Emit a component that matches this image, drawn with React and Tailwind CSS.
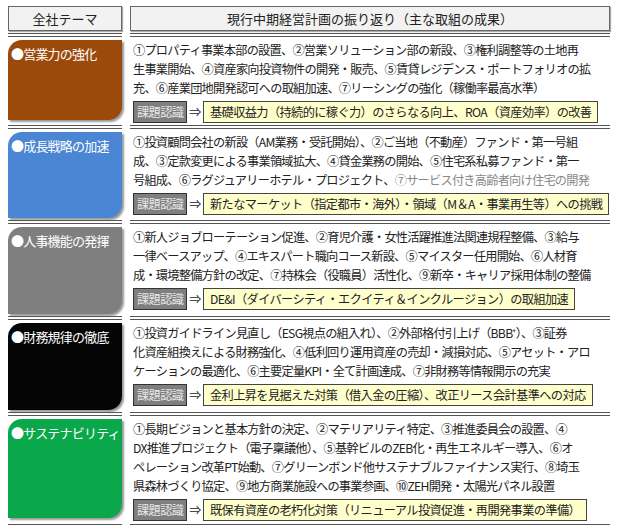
import React from "react";

const sections = [
  {
    title: "●営業力の強化",
    color: "bg-[#9c4a0c]",
    h: "h-[80px]",
    lines: [
      "①プロパティ事業本部の設置、②営業ソリューション部の新設、③権利調整等の土地再",
      "生事業開始、④資産家向投資物件の開発・販売、⑤賃貸レジデンス・ポートフォリオの拡",
      "充、⑥産業団地開発認可への取組加速、⑦リーシングの強化（稼働率最高水準）",
    ],
    issue: "基礎収益力（持続的に稼ぐ力）のさらなる向上、ROA（資産効率）の改善",
  },
  {
    title: "●成長戦略の加速",
    color: "bg-[#4a86d4]",
    h: "h-[86px]",
    lines: [
      "①投資顧問会社の新設（AM業務・受託開始）、②ご当地（不動産）ファンド・第一号組",
      "成、③定款変更による事業領域拡大、④貸金業務の開始、⑤住宅系私募ファンド・第一",
      <>号組成、⑥ラグジュアリーホテル・プロジェクト、<span className="text-[#888]">⑦サービス付き高齢者向け住宅の開発</span></>,
    ],
    issue: "新たなマーケット（指定都市・海外）・領域（M＆A・事業再生等）への挑戦",
  },
  {
    title: "●人事機能の発揮",
    color: "bg-[#7f7f7f]",
    h: "h-[87px]",
    lines: [
      "①新人ジョブローテーション促進、②育児介護・女性活躍推進法関連規程整備、③給与",
      "一律ベースアップ、④エキスパート職向コース新設、⑤マイスター任用開始、⑥人材育",
      "成・環境整備方針の改定、⑦持株会（役職員）活性化、⑨新卒・キャリア採用体制の整備",
    ],
    issue: "DE&I（ダイバーシティ・エクイティ＆インクルージョン）の取組加速",
  },
  {
    title: "●財務規律の徹底",
    color: "bg-[#050505]",
    h: "h-[87px]",
    lines: [
      "①投資ガイドライン見直し（ESG視点の組入れ）、②外部格付引上げ（BBB⁺）、③証券",
      "化資産組換えによる財務強化、④低利回り運用資産の売却・減損対応、⑤アセット・アロ",
      "ケーションの最適化、⑥主要定量KPI・全て計画達成、⑦非財務等情報開示の充実",
    ],
    issue: "金利上昇を見据えた対策（借入金の圧縮）、改正リース会計基準への対応",
  },
  {
    title: "●サステナビリティ",
    color: "bg-[#0aa84a]",
    h: "h-[99px]",
    lines: [
      "①長期ビジョンと基本方針の決定、②マテリアリティ特定、③推進委員会の設置、④",
      "DX推進プロジェクト（電子稟議他）、⑤基幹ビルのZEB化・再生エネルギー導入、⑥オ",
      "ペレーション改革PT始動、⑦グリーンボンド他サステナブルファイナンス実行、⑧埼玉",
      "県森林づくり協定、⑨地方商業施設への事業参画、⑩ZEH開発・太陽光パネル設置",
    ],
    issue: "既保有資産の老朽化対策（リニューアル投資促進・再開発事業の準備）",
  },
];

export default function App() {
  return (
    <div className="w-[618px] h-[527px] bg-white px-[8px] pt-[6px] text-[#222] overflow-hidden" style={{ fontFamily: '"Noto Sans CJK JP", sans-serif' }}>
      <div className="grid grid-cols-[114px_minmax(0,1fr)] gap-x-[8px]">
        <div className="h-[25px] bg-[#f2f2f2] border border-[#666] flex items-center justify-center text-[13px] shadow-[1px_1px_1px_#aaa]">全社テーマ</div>
        <div className="h-[25px] bg-[#f2f2f2] border border-[#666] flex items-center justify-center text-[13px] shadow-[1px_1px_1px_#aaa]">現行中期経営計画の振り返り（主な取組の成果）</div>
        {sections.map((s, i) => (
          <React.Fragment key={i}>
            <div className="mt-[2px] border-t-[4px] border-double border-[#555] pt-[3px]">
              <div className={`${s.color} ${s.h} rounded-tl-[14px] rounded-br-[14px] text-white text-[13px] tracking-[-0.8px] whitespace-nowrap pl-[3px] pt-[4px] shadow-[2px_2px_2px_#999]`}>{s.title}</div>
            </div>
            <div className="mt-[2px] border-t-[4px] border-double border-[#555] pt-[4px] pl-[3px] overflow-hidden">
              <div className="text-[12.2px] leading-[19px] whitespace-nowrap tracking-[-0.75px]">
                {s.lines.map((l, j) => <div key={j}>{l}</div>)}
              </div>
              <div className="flex items-center mt-[3px] text-[12.2px] tracking-[-0.6px] whitespace-nowrap">
                <div className="h-[22px] px-[3px] bg-[#7f7f7f] border border-[#333] text-[#e8e8e8] flex items-center">課題認識</div>
                <span className="mx-[2px]">⇒</span>
                <div className="h-[22px] px-[6px] bg-[#ffffcc] border border-[#444] flex items-center">{s.issue}</div>
              </div>
            </div>
          </React.Fragment>
        ))}
        <div className="mt-[3px] border-t-[4px] border-double border-[#555]" />
        <div className="mt-[3px] border-t-[4px] border-double border-[#555]" />
      </div>
    </div>
  );
}
